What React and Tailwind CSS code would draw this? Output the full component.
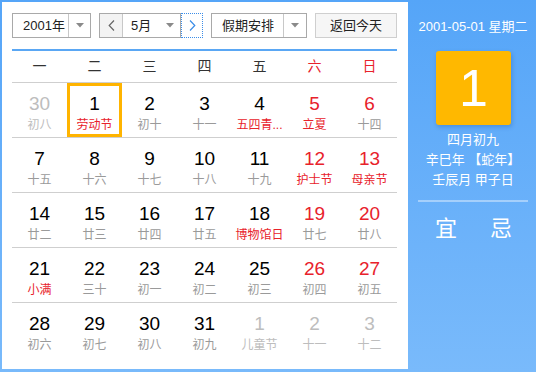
const weekdays = [
  { t: '一' }, { t: '二' }, { t: '三' }, { t: '四' }, { t: '五' },
  { t: '六', red: true }, { t: '日', red: true },
]

// n: day, l: lunar text, nr: red number, lr: red lunar, o: other month, sel: selected
const rows = [
  [
    { n: 30, l: '初八', o: true },
    { n: 1, l: '劳动节', lr: true, sel: true },
    { n: 2, l: '初十' },
    { n: 3, l: '十一' },
    { n: 4, l: '五四青...', lr: true },
    { n: 5, l: '立夏', nr: true, lr: true },
    { n: 6, l: '十四', nr: true },
  ],
  [
    { n: 7, l: '十五' },
    { n: 8, l: '十六' },
    { n: 9, l: '十七' },
    { n: 10, l: '十八' },
    { n: 11, l: '十九' },
    { n: 12, l: '护士节', nr: true, lr: true },
    { n: 13, l: '母亲节', nr: true, lr: true },
  ],
  [
    { n: 14, l: '廿二' },
    { n: 15, l: '廿三' },
    { n: 16, l: '廿四' },
    { n: 17, l: '廿五' },
    { n: 18, l: '博物馆日', lr: true },
    { n: 19, l: '廿七', nr: true },
    { n: 20, l: '廿八', nr: true },
  ],
  [
    { n: 21, l: '小满', lr: true },
    { n: 22, l: '三十' },
    { n: 23, l: '初一' },
    { n: 24, l: '初二' },
    { n: 25, l: '初三' },
    { n: 26, l: '初四', nr: true },
    { n: 27, l: '初五', nr: true },
  ],
  [
    { n: 28, l: '初六' },
    { n: 29, l: '初七' },
    { n: 30, l: '初八' },
    { n: 31, l: '初九' },
    { n: 1, l: '儿童节', o: true },
    { n: 2, l: '十一', o: true },
    { n: 3, l: '十二', o: true },
  ],
]

function Caret() {
  return (
    <svg width="8" height="5" viewBox="0 0 8 5">
      <path d="M0 0 L8 0 L4 4.5 Z" fill="#8a8a8a" />
    </svg>
  )
}

function Select({ label, width, textWidth }) {
  return (
    <div className={`flex h-[25px] ${width} border border-[#a9a9a9] bg-white`}>
      <div className={`${textWidth} flex items-center pl-[10px] text-[13px] text-[#222]`}>{label}</div>
      <div className="flex-1 border-l border-[#c8c8c8] flex items-center justify-center">
        <Caret />
      </div>
    </div>
  )
}

function DayCell({ d }) {
  let numColor = 'text-black'
  if (d.nr) numColor = 'text-[#e8222b]'
  if (d.o) numColor = 'text-[#bdbdbd]'
  let lunColor = 'text-[#9a9a9a]'
  if (d.lr) lunColor = 'text-[#e8222b]'
  if (d.o) lunColor = 'text-[#bdbdbd]'
  return (
    <div className={`h-[54px] flex flex-col items-center ${d.sel ? 'border-[3px] border-[#ffb400] pt-[6px]' : 'pt-[9px]'}`}>
      <div className={`text-[19px] leading-[24px] ${numColor}`}>{d.n}</div>
      <div className={`text-[12px] leading-[18px] whitespace-nowrap ${lunColor}`}>{d.l}</div>
    </div>
  )
}

export default function App() {
  return (
    <div className="w-[536px] h-[372px] flex pl-[2px] pt-[2px] pb-[3px] bg-linear-to-b from-[#55a5f8] to-[#79bafb] font-['Liberation_Sans','Noto_Sans_CJK_SC',sans-serif]">
      <div className="w-[406px] h-full bg-white pl-[10px] pr-[11px] pt-[11px]">
        <div className="flex items-center h-[25px]">
          <Select label="2001年" width="w-[79px]" textWidth="w-[55px]" />
          <div className="ml-[8px] flex h-[25px] w-[82px] border border-[#a9a9a9]">
            <div className="w-[23px] bg-[#f3f3f3] border-r border-[#c8c8c8] flex items-center justify-center">
              <svg width="7" height="11" viewBox="0 0 7 11">
                <path d="M6 0.5 L1.2 5.5 L6 10.5" fill="none" stroke="#666" strokeWidth="1.2" />
              </svg>
            </div>
            <div className="w-[36px] flex items-center pl-[8px] text-[13px] text-[#222]">5月</div>
            <div className="flex-1 flex items-center justify-center">
              <Caret />
            </div>
          </div>
          <div className="w-[22px] h-[25px] border border-dotted border-[#3b8de8] flex items-center justify-center">
            <svg width="7" height="11" viewBox="0 0 7 11">
              <path d="M1 0.5 L5.8 5.5 L1 10.5" fill="none" stroke="#3b8de8" strokeWidth="1.2" />
            </svg>
          </div>
          <div className="ml-[8px]">
            <Select label="假期安排" width="w-[96px]" textWidth="w-[71px]" />
          </div>
          <div className="ml-[8px] w-[82px] h-[25px] border border-[#cfcfcf] bg-[#f6f6f6] flex items-center justify-center text-[13px] text-[#222]">
            返回今天
          </div>
        </div>

        <div className="mt-[11px] border-t-2 border-[#5aa7f4]">
          <div className="grid grid-cols-7 h-[32px] border-b border-[#cfcfcf]">
            {weekdays.map((w) => (
              <div key={w.t} className={`flex items-center justify-center text-[14px] ${w.red ? 'text-[#e8222b]' : 'text-[#333]'}`}>
                {w.t}
              </div>
            ))}
          </div>
          {rows.map((r, i) => (
            <div key={i} className={`grid grid-cols-7 h-[55px] ${i < rows.length - 1 ? 'border-b border-[#cfcfcf]' : ''}`}>
              {r.map((d, j) => (
                <DayCell key={j} d={d} />
              ))}
            </div>
          ))}
        </div>
      </div>

      <div className="flex-1 flex flex-col items-center text-white pt-[15px]">
        <div className="text-[13px] leading-[20px] pl-[2px]">2001-05-01 星期二</div>
        <div className="mt-[14px] ml-[3px] w-[75px] h-[74px] rounded-[3px] bg-[#ffb800] shadow-[1px_2px_4px_rgba(0,60,140,0.25)] flex items-center justify-center text-[52px] leading-none">
          1
        </div>
        <div className="mt-[5px] flex flex-col items-center text-[13px] leading-[20px] pl-[2px]">
          <div>四月初九</div>
          <div>辛巳年 【蛇年】</div>
          <div>壬辰月 甲子日</div>
        </div>
        <div className="mt-[10px] ml-[2px] w-[110px] h-[2px] bg-white/40" />
        <div className="mt-[13px] ml-[3px] flex gap-[33px] text-[22px] leading-[28px]">
          <span>宜</span>
          <span>忌</span>
        </div>
      </div>
    </div>
  )
}
